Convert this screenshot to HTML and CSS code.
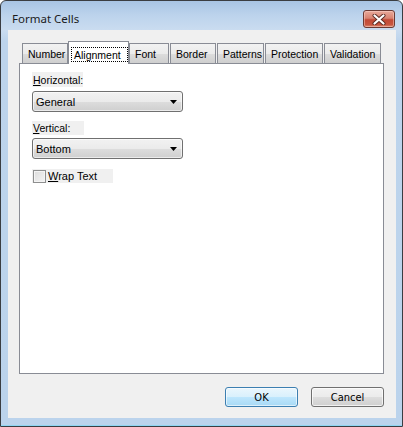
FILE: index.html
```html
<!DOCTYPE html>
<html>
<head>
<meta charset="utf-8">
<title>Format Cells</title>
<link rel="stylesheet" href="styles.css">
</head>
<body>
<div class="window">
  <div class="titlebar">
    <span class="title">Format Cells</span>
    <div class="close">
      <svg width="14" height="11" viewBox="0 0 14 11">
        <path d="M2.5 1.5 L11.5 9.5 M11.5 1.5 L2.5 9.5" stroke="#5a2a22" stroke-width="4" stroke-linecap="round" fill="none"/>
        <path d="M2.5 1.5 L11.5 9.5 M11.5 1.5 L2.5 9.5" stroke="#ffffff" stroke-width="2.2" stroke-linecap="round" fill="none"/>
      </svg>
    </div>
  </div>
  <div class="client">
    <div class="tabs">
      <div class="tab t-number">Number</div>
      <div class="tab active t-align"><span class="focus">Alignment</span></div>
      <div class="tab t-font">Font</div>
      <div class="tab t-border">Border</div>
      <div class="tab t-patterns">Patterns</div>
      <div class="tab t-protection">Protection</div>
      <div class="tab t-validation">Validation</div>
    </div>
    <div class="panel">
      <div class="label lbl-h"><u>H</u>orizontal:</div>
      <div class="combo combo-h">
        <span>General</span>
        <svg class="arrow" width="7" height="4" viewBox="0 0 7 4"><path d="M0 0 H7 L3.5 4 Z" fill="#000"/></svg>
      </div>
      <div class="label lbl-v"><u>V</u>ertical:</div>
      <div class="combo combo-v">
        <span>Bottom</span>
        <svg class="arrow" width="7" height="4" viewBox="0 0 7 4"><path d="M0 0 H7 L3.5 4 Z" fill="#000"/></svg>
      </div>
      <div class="check">
        <span class="box"></span>
        <span class="check-text"><u>W</u>rap Text</span>
      </div>
    </div>
    <div class="buttons">
      <div class="btn default">OK</div>
      <div class="btn">Cancel</div>
    </div>
  </div>
</div>
</body>
</html>
```
FILE: styles.css
```css
* { box-sizing: border-box; }
html, body { margin: 0; padding: 0; background: #ffffff; }
body { font-family: "Liberation Sans", Arial, sans-serif; font-size: 10.5px; color: #000; }

.window {
  width: 403px;
  height: 427px;
  border: 1px solid #3a3d42;
  border-radius: 6px 6px 0 0;
  background: linear-gradient(180deg, #a8c4e4 0px, #bcd3ec 14px, #cadcf0 29px, #bdd4ec 40px, #bbd3ec 100%);
  box-shadow: inset 0 -1px 0 #8fd6f2;
  display: flex;
  flex-direction: column;
}

.titlebar {
  height: 29px;
  display: flex;
  align-items: flex-start;
  justify-content: space-between;
  padding: 0 7px 0 11px;
}
.title {
  font-family: "Noto Sans", "Open Sans", sans-serif;
  font-size: 11.5px;
  color: #1b1b1b;
  margin-top: 10px;
  line-height: 16px;
}
.close {
  margin-top: 9px;
  width: 32px;
  height: 18px;
  border: 1px solid #6b3a33;
  border-radius: 3px;
  background: linear-gradient(180deg, #e9a99a 0%, #d88371 45%, #c24a36 55%, #c8563f 85%, #dc8a72 100%);
  box-shadow: inset 0 0 0 1px rgba(255,220,210,0.45);
  display: flex;
  align-items: center;
  justify-content: center;
}
.close svg { display: block; }

.client {
  margin: 0 6px 0 7px;
  height: 388px;
  background: #f0f0f0;
  padding-top: 11px;
  display: flex;
  flex-direction: column;
}

.tabs {
  display: flex;
  align-items: flex-end;
  height: 22px;
  margin-left: 14px;
  position: relative;
  z-index: 1;
}
.tab {
  height: 20px;
  border: 1px solid #898c95;
  border-bottom: none;
  background: linear-gradient(180deg, #f2f2f2 0%, #ebebeb 50%, #dddddd 51%, #cfcfcf 100%);
  padding: 4px 0 0 5px;
  line-height: 12px;
  white-space: nowrap;
}
.t-number { width: 46px; }
.t-align { width: 61px; }
.t-font { width: 40px; }
.t-border { width: 46px; margin-left: 1px; }
.t-patterns { width: 47px; margin-left: 1px; }
.t-protection { width: 58px; margin-left: 1px; }
.t-validation { width: 57px; margin-left: 1px; }

.tab.active {
  height: 23px;
  margin-bottom: -1px;
  background: #ffffff;
  padding: 5px 0 0 2px;
}
.focus {
  display: block;
  width: 57px;
  height: 15px;
  border: 1px dotted #000;
  padding: 1px 0 0 2px;
  line-height: 12px;
}

.panel {
  margin-left: 11px;
  width: 365px;
  height: 311px;
  background: #ffffff;
  border: 1px solid #898c95;
  padding: 8px 0 0 12px;
  display: flex;
  flex-direction: column;
  align-items: flex-start;
}

.label {
  height: 15px;
  background: #f0f0f0;
  padding: 2px 0 0 1px;
  line-height: 13px;
  white-space: nowrap;
}
.lbl-h { width: 51px; }
.lbl-v { width: 52px; margin-top: 9px; height: 14px; padding-top: 1px; }

.combo {
  width: 151px;
  height: 21px;
  border: 1px solid #707070;
  border-radius: 3px;
  background: linear-gradient(180deg, #f2f2f2 0%, #ebebeb 50%, #dddddd 51%, #cfcfcf 100%);
  box-shadow: inset 0 0 0 1px rgba(255,255,255,0.6);
  display: flex;
  align-items: center;
  justify-content: space-between;
  padding: 0 5px 0 3px;
  font-size: 11px;
}
.combo-h { margin-top: 4px; }
.combo-v { margin-top: 3px; }
.arrow { display: block; }

.check {
  margin-top: 10px;
  width: 81px;
  height: 14px;
  background: #f0f0f0;
  display: flex;
  align-items: center;
  padding-left: 1px;
  font-size: 11px;
}
.box {
  width: 13px;
  height: 13px;
  border: 1px solid #8e8f8f;
  background: linear-gradient(135deg, #dcdcdc 0%, #f4f4f4 100%);
  box-shadow: inset 0 0 0 1px #f4f4f4;
  margin-right: 2px;
}
.check-text { line-height: 13px; }

.buttons {
  display: flex;
  justify-content: flex-end;
  gap: 13px;
  margin-top: 13px;
  padding-right: 12px;
}
.btn {
  width: 73px;
  height: 20px;
  border: 1px solid #707070;
  border-radius: 3px;
  background: linear-gradient(180deg, #f2f2f2 0%, #ebebeb 50%, #dddddd 51%, #cfcfcf 100%);
  box-shadow: inset 0 0 0 1px rgba(255,255,255,0.7);
  display: flex;
  align-items: center;
  justify-content: center;
  font-family: "Liberation Sans Narrow", "DejaVu Sans Condensed", "Liberation Sans", sans-serif;
  font-size: 11px;
  color: #000;
}
.btn.default {
  border-color: #3c7fb1;
  background: linear-gradient(180deg, #eaf6fd 0%, #d9f0fc 50%, #bee6fd 51%, #a7d9f5 100%);
  box-shadow: inset 0 0 0 1px rgba(255,255,255,0.6);
}
```
